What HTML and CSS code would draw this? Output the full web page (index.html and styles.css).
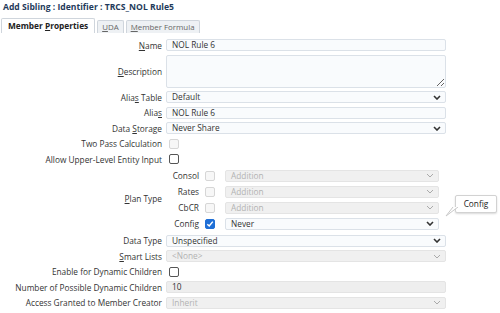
FILE: index.html
```html
<!DOCTYPE html>
<html lang="en">
<head>
    <meta charset="UTF-8">
    <title>Add Sibling</title>
    <link rel="stylesheet" href="styles.css">
</head>
<body>
    <div class="dialog">
        <h1 class="title">Add Sibling : Identifier : TRCS_NOL Rule5</h1>

        <div class="tabs">
            <div class="tab active">Member <u>P</u>roperties</div>
            <div class="tab"><u>U</u>DA</div>
            <div class="tab"><u>M</u>ember Formula</div>
        </div>

        <div class="form">
            <label class="lbl"><u>N</u>ame</label>
            <div class="field">NOL Rule 6</div>

            <label class="lbl"><u>D</u>escription</label>
            <textarea class="area"></textarea>

            <label class="lbl">Alia<u>s</u> Table</label>
            <div class="field select">
                <span>Default</span>
                <svg class="chev" width="8" height="5" viewBox="0 0 8 5"><polyline points="1,1 4,4 7,1"/></svg>
            </div>

            <label class="lbl">Alia<u>s</u></label>
            <div class="field">NOL Rule 6</div>

            <label class="lbl">Data <u>S</u>torage</label>
            <div class="field select">
                <span>Never Share</span>
                <svg class="chev" width="8" height="5" viewBox="0 0 8 5"><polyline points="1,1 4,4 7,1"/></svg>
            </div>

            <label class="lbl">Two Pass Calculation</label>
            <div class="cell"><span class="check disabled"></span></div>

            <label class="lbl">Allow Upper-Level Entity Input</label>
            <div class="cell"><span class="check"></span></div>

            <label class="lbl plan-lbl"><u>P</u>lan Type</label>
            <div class="plan">
                <span class="sub">Consol</span>
                <span class="check disabled"></span>
                <div class="field select off">
                    <span>Addition</span>
                    <svg class="chev" width="8" height="5" viewBox="0 0 8 5"><polyline points="1,1 4,4 7,1"/></svg>
                </div>

                <span class="sub">Rates</span>
                <span class="check disabled"></span>
                <div class="field select off">
                    <span>Addition</span>
                    <svg class="chev" width="8" height="5" viewBox="0 0 8 5"><polyline points="1,1 4,4 7,1"/></svg>
                </div>

                <span class="sub">CbCR</span>
                <span class="check disabled"></span>
                <div class="field select off">
                    <span>Addition</span>
                    <svg class="chev" width="8" height="5" viewBox="0 0 8 5"><polyline points="1,1 4,4 7,1"/></svg>
                </div>

                <span class="sub">Config</span>
                <span class="check on">
                    <svg width="8" height="8" viewBox="0 0 8 8"><polyline points="1.3,4.2 3.2,6 6.8,1.6"/></svg>
                </span>
                <div class="field select">
                    <span>Never</span>
                    <svg class="chev" width="8" height="5" viewBox="0 0 8 5"><polyline points="1,1 4,4 7,1"/></svg>
                </div>
            </div>

            <label class="lbl">Data Type</label>
            <div class="field select">
                <span>Unspecified</span>
                <svg class="chev" width="8" height="5" viewBox="0 0 8 5"><polyline points="1,1 4,4 7,1"/></svg>
            </div>

            <label class="lbl"><u>S</u>mart Lists</label>
            <div class="field select off">
                <span>&lt;None&gt;</span>
                <svg class="chev" width="8" height="5" viewBox="0 0 8 5"><polyline points="1,1 4,4 7,1"/></svg>
            </div>

            <label class="lbl">Enable for Dynamic Children</label>
            <div class="cell"><span class="check"></span></div>

            <label class="lbl">Number of Possible Dynamic Children</label>
            <div class="field grey">10</div>

            <label class="lbl">Access Granted to Member Creator</label>
            <div class="field select off">
                <span>Inherit</span>
                <svg class="chev" width="8" height="5" viewBox="0 0 8 5"><polyline points="1,1 4,4 7,1"/></svg>
            </div>
        </div>

        <div class="tip">
            <svg class="tail" width="14" height="10" viewBox="0 0 14 10"><polyline points="13,0 1,9 8,0"/></svg>
            Config
        </div>
    </div>
</body>
</html>
```

FILE: styles.css
```css
body {
    margin: 0;
    padding: 0;
    background: white;
    font-family: "Open Sans", "Noto Sans", Arial, sans-serif;
    font-size: 8.3px;
    color: #333;
}
.dialog {
    position: relative;
    width: 500px;
    height: 313px;
    overflow: hidden;
}
.title {
    margin: 0;
    padding: 1px 0 0 3px;
    font-size: 8.6px;
    font-weight: bold;
    color: #1f3b5b;
    line-height: 13px;
}
.tabs {
    display: flex;
    gap: 2px;
    margin: 4px 0 0 1px;
    height: 15px;
    align-items: flex-end;
}
.tab {
    height: 12px;
    line-height: 12px;
    padding: 0 4px;
    border: 1px solid #cfd5dc;
    border-bottom: none;
    border-radius: 2px 2px 0 0;
    background: #eef1f4;
    color: #666;
    font-size: 7.9px;
}
.tab.active {
    height: 14px;
    line-height: 14px;
    padding: 0 6px;
    background: white;
    color: #222;
    font-weight: bold;
    font-size: 8.3px;
}
.form {
    display: grid;
    grid-template-columns: 162px 280px;
    grid-auto-rows: minmax(12px, auto);
    column-gap: 4px;
    row-gap: 3.5px;
    margin-top: 6px;
}
.lbl {
    text-align: right;
    align-self: center;
    white-space: nowrap;
    color: #333;
}
.field {
    box-sizing: border-box;
    height: 12px;
    line-height: 10px;
    padding: 0 5px;
    border: 1px solid #dbe1e8;
    border-radius: 2px;
    background: #f9fbfd;
    color: #333;
    white-space: nowrap;
}
.area {
    box-sizing: border-box;
    height: 33px;
    margin: 0;
    border: 1px solid #dbe1e8;
    border-radius: 2px;
    background: #f9fbfd;
    resize: vertical;
}
.select {
    display: flex;
    justify-content: space-between;
    align-items: center;
}
.chev {
    fill: none;
    stroke: #333;
    stroke-width: 1.6;
    margin-right: -1px;
}
.select.off {
    background: #f0f0f0;
    border-color: #e4e4e4;
    color: #b2b2b2;
}
.select.off .chev {
    stroke: #aaa;
    stroke-width: 1;
}
.grey {
    background: #eeeeee;
    border-color: #e4e4e4;
}
.cell {
    display: flex;
    align-items: center;
    padding-left: 3px;
}
.check {
    box-sizing: border-box;
    display: inline-flex;
    align-items: center;
    justify-content: center;
    width: 10px;
    height: 10px;
    border: 1px solid #555;
    border-radius: 2px;
    background: white;
}
.check.disabled {
    border-color: #d6d6d6;
    background: #f7f7f7;
}
.check.on {
    border-color: #1f6fd6;
    background: #1f6fd6;
}
.check.on svg {
    fill: none;
    stroke: white;
    stroke-width: 1.5;
}
.plan-lbl {
    margin-bottom: 2px;
}
.plan {
    display: grid;
    grid-template-columns: 33px 10px 218px;
    grid-auto-rows: 12px;
    column-gap: 6px;
    row-gap: 4px;
    align-items: center;
    margin: 1px 0 1.5px;
}
.plan .field {
    margin-left: 4px;
}
.sub {
    text-align: right;
}
.tip {
    position: absolute;
    left: 455px;
    top: 195px;
    width: 42px;
    height: 18px;
    box-sizing: border-box;
    border: 1px solid #d2d2d2;
    border-radius: 2px;
    background: white;
    box-shadow: 0 1px 2px rgba(0,0,0,0.15);
    text-align: center;
    line-height: 16px;
    color: #222;
}
.tail {
    position: absolute;
    left: -11px;
    top: 11px;
    fill: white;
    stroke: #c8c8c8;
    stroke-width: 1;
}
```
